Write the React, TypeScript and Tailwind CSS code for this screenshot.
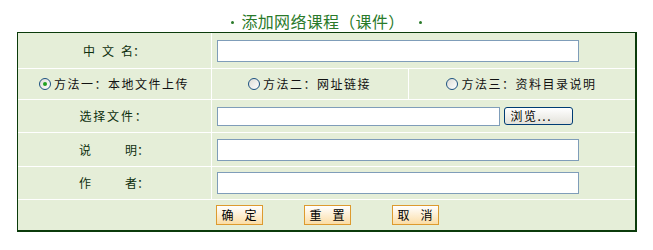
import React, { useState } from "react";

const FONT = { fontFamily: '"SimSun", "Noto Sans CJK SC", sans-serif' };

function Radio({ checked }: { checked?: boolean }) {
  return (
    <span className="relative inline-flex w-[12px] h-[12px] rounded-full border border-[#1c5180] bg-gradient-to-br from-[#dcdcd6] to-white items-center justify-center shrink-0">
      {checked && <span className="w-[4px] h-[4px] rounded-full bg-[#21a121]" />}
    </span>
  );
}

export default function App() {
  const [method, setMethod] = useState(1);
  const methods = ["方法一：本地文件上传", "方法二：网址链接", "方法三：资料目录说明"];

  return (
    <div className="w-[653px] h-[250px] bg-white" style={FONT}>
      {/* title */}
      <div className="h-[32px] pt-[12px] flex justify-center items-start text-[16px] leading-[18px] text-[#2a7a2a]">
        <span className="w-[3px] h-[3px] bg-[#2a7a2a] rounded-full mt-[9px]" />
        <span className="ml-[7px] tracking-[0.3px]">添加网络课程（课件）</span>
        <span className="w-[3px] h-[3px] bg-[#2a7a2a] rounded-full mt-[9px] ml-[14px]" />
      </div>

      <div className="w-[620px] mx-auto border-l border-t border-r-2 border-b-2 border-[#0b3b0b] bg-[#e5eed8]">
        <div className="h-[36px] flex items-center border-b border-white">
          <div className="w-[194px] border-r border-white flex items-center justify-center text-[12px] text-[#0d2e0d] self-stretch">
            <span>中</span>
            <span className="ml-[7px]">文</span>
            <span className="ml-[7px]">名</span>
            <span>：</span>
          </div>
          <div className="pl-[5px] pt-[1px]">
            <input className="w-[362px] h-[22px] border border-[#7f9db9] bg-white outline-none" />
          </div>
        </div>

        <div className="h-[31px] flex border-b border-white text-[12px] tracking-[1.5px] text-[#111]">
          {methods.map((m, i) => (
            <button
              key={m}
              onClick={() => setMethod(i + 1)}
              className={`flex items-center justify-center gap-[3px] ${
                i === 0 ? "w-[194px] border-r border-white" : i === 1 ? "w-[197px] border-r border-white" : "flex-1"
              }`}
            >
              <Radio checked={method === i + 1} />
              <span>{m}</span>
            </button>
          ))}
        </div>

        <div className="h-[33px] flex items-center border-b border-white">
          <div className="w-[194px] border-r border-white flex items-center justify-center text-[12px] tracking-[1.8px] text-[#0d2e0d] self-stretch">
            选择文件：
          </div>
          <div className="pl-[5px] flex items-center gap-[4px]">
            <input className="w-[283px] h-[19px] border border-[#7f9db9] bg-white outline-none" />
            <button className="w-[69px] h-[18px] rounded-[3px] border border-[#003c74] bg-gradient-to-b from-white to-[#e3e2da] text-[12px] leading-[16px] text-black text-left pl-[6px] tracking-[1.5px]">
              浏览...
            </button>
          </div>
        </div>

        <div className="h-[34px] flex items-center border-b border-white">
          <div className="w-[194px] border-r border-white flex items-center justify-center text-[12px] text-[#0d2e0d] self-stretch">
            <span>说</span>
            <span className="ml-[34px]">明</span>
            <span>：</span>
          </div>
          <div className="pl-[5px]">
            <input className="w-[362px] h-[22px] border border-[#7f9db9] bg-white outline-none" />
          </div>
        </div>

        <div className="h-[33px] flex items-center border-b border-white">
          <div className="w-[194px] border-r border-white flex items-center justify-center text-[12px] text-[#0d2e0d] self-stretch">
            <span>作</span>
            <span className="ml-[34px]">者</span>
            <span>：</span>
          </div>
          <div className="pl-[5px]">
            <input className="w-[362px] h-[22px] border border-[#7f9db9] bg-white outline-none" />
          </div>
        </div>

        <div className="h-[30px] flex items-center justify-center gap-[41px] pl-[2px]">
          {["确", "重", "取"].map((a, i) => (
            <button
              key={a}
              className="w-[47px] h-[20px] border border-[#dd9a2e] bg-gradient-to-b from-white to-[#fbdda5] text-[12px] leading-[18px] text-black flex items-center justify-center gap-[11px]"
            >
              <span>{a}</span>
              <span>{["定", "置", "消"][i]}</span>
            </button>
          ))}
        </div>
      </div>
    </div>
  );
}
